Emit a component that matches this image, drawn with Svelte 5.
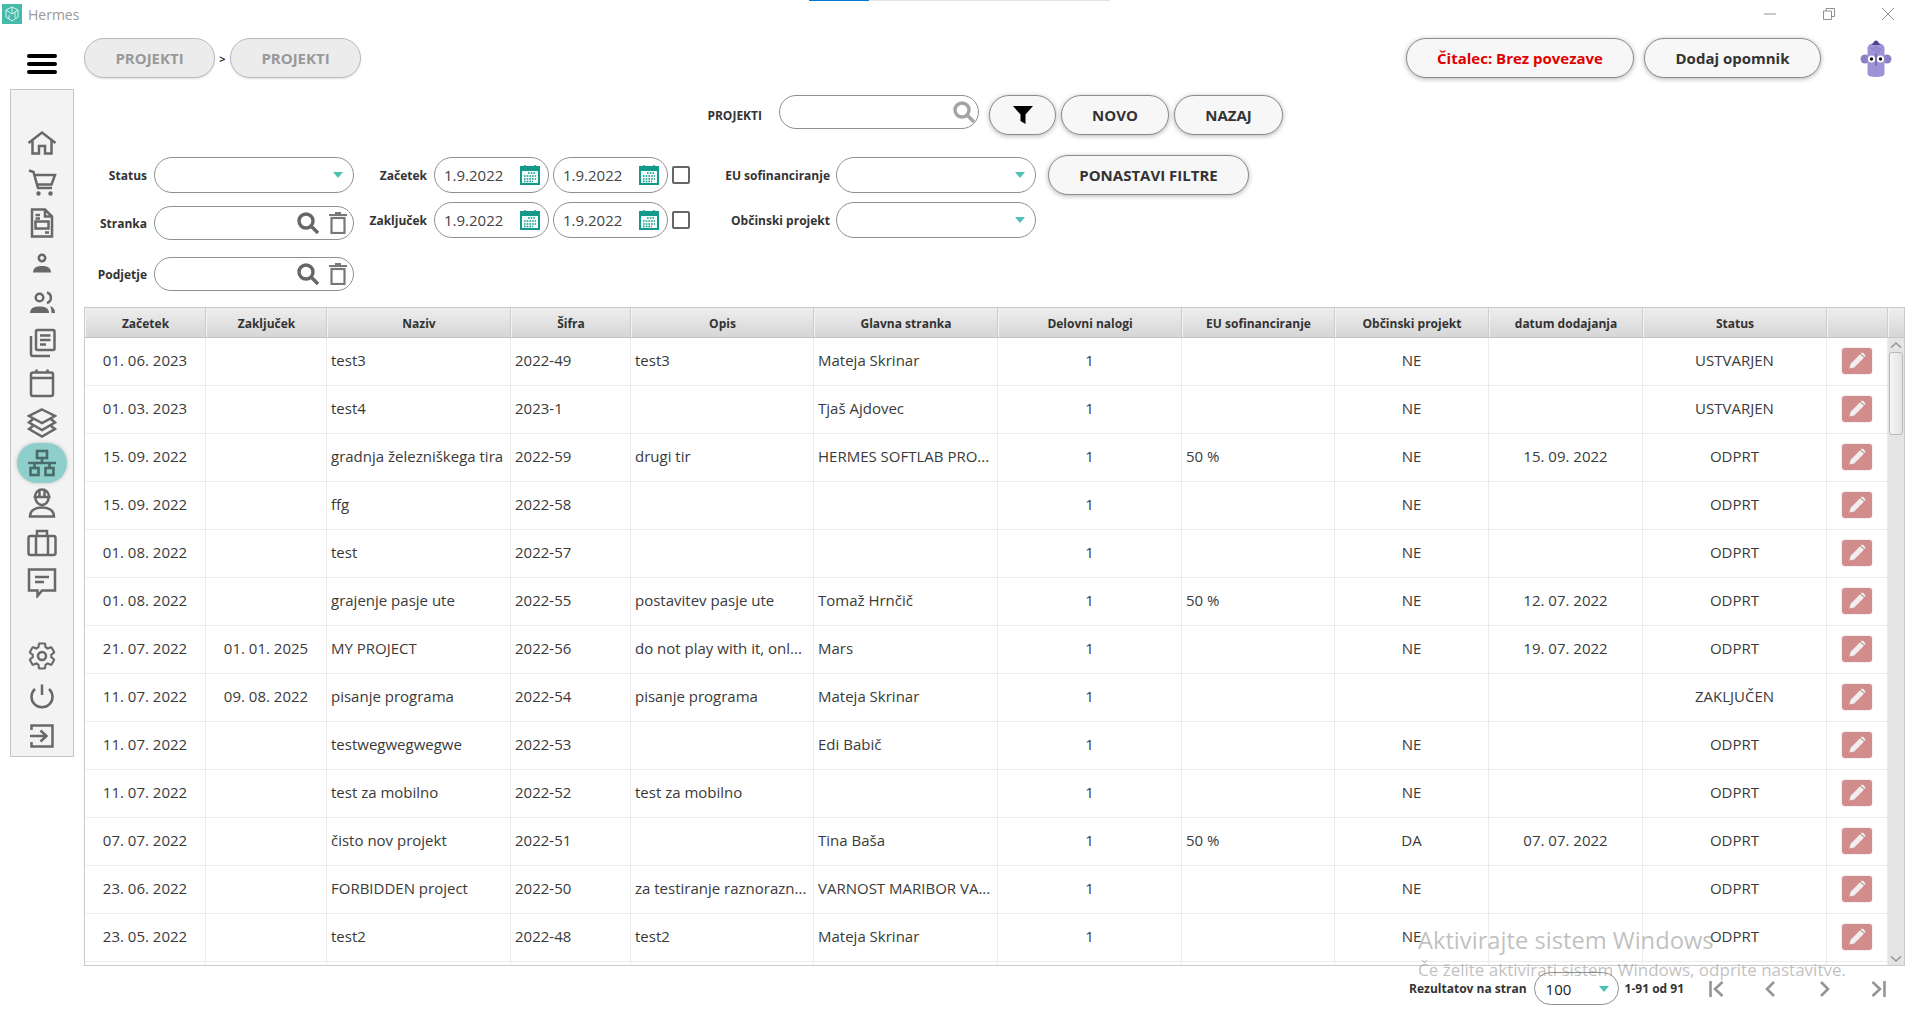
<script>
	const rows = [
		['01. 06. 2023', '', 'test3', '2022-49', 'test3', 'Mateja Skrinar', '1', '', 'NE', '', 'USTVARJEN'],
		['01. 03. 2023', '', 'test4', '2023-1', '', 'Tjaš Ajdovec', '1', '', 'NE', '', 'USTVARJEN'],
		['15. 09. 2022', '', 'gradnja železniškega tira', '2022-59', 'drugi tir', 'HERMES SOFTLAB PRO...', '1', '50 %', 'NE', '15. 09. 2022', 'ODPRT'],
		['15. 09. 2022', '', 'ffg', '2022-58', '', '', '1', '', 'NE', '', 'ODPRT'],
		['01. 08. 2022', '', 'test', '2022-57', '', '', '1', '', 'NE', '', 'ODPRT'],
		['01. 08. 2022', '', 'grajenje pasje ute', '2022-55', 'postavitev pasje ute', 'Tomaž Hrnčič', '1', '50 %', 'NE', '12. 07. 2022', 'ODPRT'],
		['21. 07. 2022', '01. 01. 2025', 'MY PROJECT', '2022-56', 'do not play with it, onl...', 'Mars', '1', '', 'NE', '19. 07. 2022', 'ODPRT'],
		['11. 07. 2022', '09. 08. 2022', 'pisanje programa', '2022-54', 'pisanje programa', 'Mateja Skrinar', '1', '', '', '', 'ZAKLJUČEN'],
		['11. 07. 2022', '', 'testwegwegwegwe', '2022-53', '', 'Edi Babič', '1', '', 'NE', '', 'ODPRT'],
		['11. 07. 2022', '', 'test za mobilno', '2022-52', 'test za mobilno', '', '1', '', 'NE', '', 'ODPRT'],
		['07. 07. 2022', '', 'čisto nov projekt', '2022-51', '', 'Tina Baša', '1', '50 %', 'DA', '07. 07. 2022', 'ODPRT'],
		['23. 06. 2022', '', 'FORBIDDEN project', '2022-50', 'za testiranje raznorazn...', 'VARNOST MARIBOR VA...', '1', '', 'NE', '', 'ODPRT'],
		['23. 05. 2022', '', 'test2', '2022-48', 'test2', 'Mateja Skrinar', '1', '', 'NE', '', 'ODPRT']
	];

	const headers = [
		'Začetek', 'Zaključek', 'Naziv', 'Šifra', 'Opis', 'Glavna stranka',
		'Delovni nalogi', 'EU sofinanciranje', 'Občinski projekt', 'datum dodajanja', 'Status', ''
	];

	// columns with left aligned text, everything else is centered
	const leftCols = [2, 3, 4, 5, 7];
</script>

{#snippet searchIcon()}
	<svg class="ico-search" viewBox="0 0 22 22">
		<circle cx="9" cy="9" r="7" />
		<path d="M14 14 L21 21" />
	</svg>
{/snippet}

{#snippet trashIcon()}
	<svg class="ico-trash" viewBox="0 0 18 22">
		<path d="M0 3 H18 M6 1 H12" />
		<rect x="2.5" y="6" width="13" height="15" />
	</svg>
{/snippet}

{#snippet caret()}
	<span class="caret"></span>
{/snippet}

{#snippet dateField()}
	<div class="field date">
		<span>1.9.2022</span>
		<svg class="ico-cal" viewBox="0 0 20 20">
			<rect x="0" y="1" width="20" height="19" fill="#12998a" />
			<rect x="2" y="6" width="16" height="12" fill="#f3fbfa" />
			<path d="M5 0 V2 M15 0 V2" stroke="#12998a" stroke-width="1.5" />
			<path d="M8 8 H16 M4 11 H16 M4 14 H16 M4 16.5 H13" stroke="#12998a" stroke-width="1.6" stroke-dasharray="1.6 1.1" />
		</svg>
	</div>
{/snippet}

<div class="app">
	<div class="titlebar">
		<div class="progress"><span></span></div>
		<span class="logo">
			<svg viewBox="0 0 20 20" width="20" height="20">
				<path d="M10 3 L16 6 V13 L10 17 L4 13 V6 Z M10 3 V10 M4 6 L10 10 L16 6 M7 11 V15 M13 8 V14" fill="none" stroke="#d8f3ef" stroke-width="1" />
			</svg>
		</span>
		<span class="app-name">Hermes</span>
		<div class="win-controls">
			<svg viewBox="0 0 12 12"><path d="M0 6 H12" /></svg>
			<svg viewBox="0 0 12 12"><path d="M0.5 3 H8.5 V11.5 H0.5 Z M3 3 V0.5 H11.5 V8.5 H8.5" /></svg>
			<svg viewBox="0 0 12 12"><path d="M0 0 L12 12 M12 0 L0 12" /></svg>
		</div>
	</div>

	<div class="shell">
		<div class="rail">
			<div class="burger"><span></span><span></span><span></span></div>
			<nav class="sidebar">
				<div class="nav-item">
					<svg viewBox="0 0 30 30"><path d="M1.5 15 L15 4.5 L28.5 15 M5.5 12 V25.5 H12 V18 H18 V25.5 H24.5 V12" /></svg>
				</div>
				<div class="nav-item">
					<svg viewBox="0 0 30 30"><path d="M2 2.5 L6.5 4 L11 20 H25 M8 7 H28 L24.5 16.5 H10" /><circle class="fill" cx="11.5" cy="25.5" r="2.2" /><circle class="fill" cx="23.5" cy="25.5" r="2.2" /></svg>
				</div>
				<div class="nav-item">
					<svg viewBox="0 0 30 30"><path d="M5 1.5 H18 L25 8.5 V28.5 H5 Z M18 1.5 V8.5 H25 M8.5 7 H13 M8.5 10.5 H13 M18 24.5 H22" /><rect x="8.5" y="13.5" width="13" height="7" /></svg>
				</div>
				<div class="nav-item">
					<svg viewBox="0 0 30 30"><circle cx="15" cy="10" r="3.2" /><path class="fill" d="M6 24.5 C6 19 11 18 15 18 S24 19 24 24.5 Z" /></svg>
				</div>
				<div class="nav-item">
					<svg viewBox="0 0 30 30"><circle cx="12.5" cy="9.5" r="3.8" /><path d="M20 4.5 A5.5 5.5 0 0 1 20 15" /><path class="fill" d="M3 25 C3 19.5 8 18.5 12.5 18.5 S22 19.5 22 25 Z" /><path class="fill" d="M23 18 C26 19 28 21 28 25 H24.5 C24.5 22 24 20 23 18 Z" /></svg>
				</div>
				<div class="nav-item">
					<svg viewBox="0 0 30 30"><rect x="9" y="2" width="18.5" height="20" rx="1.5" /><path d="M4 8 V26 Q4 28 6 28 H23 M13 7.5 H23.5 M13 12 H23.5 M13 16.5 H19" /></svg>
				</div>
				<div class="nav-item">
					<svg viewBox="0 0 30 30"><rect x="4" y="4.5" width="22" height="23.5" rx="2" /><path d="M4 10 H26 M9.5 1.5 V4.5 M20.5 1.5 V4.5" /></svg>
				</div>
				<div class="nav-item">
					<svg viewBox="0 0 30 30"><path d="M15 1.5 L28 8 L15 15 L2 8 Z M6 11 L2 14.5 L15 22 L28 14.5 L24 11 M6 18 L2 21 L15 28.5 L28 21 L24 18" /></svg>
				</div>
				<div class="nav-item active">
					<svg viewBox="0 0 30 30"><rect x="10" y="3" width="10" height="7" /><path d="M15 10 V15 M1 15 H29 M7.5 15 V20 M22.5 15 V20" /><rect x="3.5" y="20" width="8" height="7" /><rect x="18.5" y="20" width="8" height="7" /></svg>
				</div>
				<div class="nav-item">
					<svg viewBox="0 0 30 30"><path d="M8 8.5 A7 7 0 0 1 22 8.5 M6.5 9 H23.5 M8.5 10 A6.5 7 0 0 0 21.5 10 M12.5 1.5 V8 M17.5 1.5 V8" /><path d="M3 28.5 C3 22 9 19.5 15 19.5 S27 22 27 28.5 Z" /></svg>
				</div>
				<div class="nav-item">
					<svg viewBox="0 0 30 30"><rect x="1.5" y="8" width="27" height="19" rx="2" /><path d="M10 8 V3 H20 V8 M9 8 V27 M21 8 V27" /></svg>
				</div>
				<div class="nav-item">
					<svg viewBox="0 0 30 30"><path d="M2 1.5 H28 V22.5 H15 L10.5 28 V22.5 H2 Z M8 9 H22 M8 14 H17" /></svg>
				</div>

				<div class="nav-spacer"></div>

				<div class="nav-item">
					<svg viewBox="0 0 30 30">
						<path transform="scale(1.25)" stroke-width="1.7" d="M19.43 12.98c.04-.32.07-.64.07-.98 0-.34-.03-.66-.07-.98l2.11-1.65c.19-.15.24-.42.12-.64l-2-3.46c-.12-.22-.39-.3-.61-.22l-2.49 1c-.52-.4-1.08-.73-1.69-.98l-.38-2.65C14.46 2.18 14.25 2 14 2h-4c-.25 0-.46.18-.49.42l-.38 2.65c-.61.25-1.17.59-1.69.98l-2.49-1c-.23-.09-.49 0-.61.22l-2 3.46c-.13.22-.07.49.12.64l2.11 1.65c-.04.32-.07.65-.07.98 0 .33.03.66.07.98l-2.11 1.65c-.19.15-.24.42-.12.64l2 3.46c.12.22.39.3.61.22l2.49-1c.52.4 1.08.73 1.69.98l.38 2.65c.03.24.24.42.49.42h4c.25 0 .46-.18.49-.42l.38-2.65c.61-.25 1.17-.59 1.69-.98l2.49 1c.23.09.49 0 .61-.22l2-3.46c.12-.22.07-.49-.12-.64l-2.11-1.65z" />
						<circle cx="15" cy="15" r="4" />
					</svg>
				</div>
				<div class="nav-item">
					<svg viewBox="0 0 30 30"><path d="M15 3.5 V14 M8 8 A10.5 10.5 0 1 0 22 8" /></svg>
				</div>
				<div class="nav-item">
					<svg viewBox="0 0 30 30"><path d="M4.5 9 V4.5 H25.5 V25.5 H4.5 V21 M3 15 H19 M13.5 9.5 L19.5 15 L13.5 20.5" /></svg>
				</div>
			</nav>
		</div>

		<main class="content">
			<div class="topbar">
				<div class="crumb">PROJEKTI</div>
				<span class="crumb-sep">&gt;</span>
				<div class="crumb">PROJEKTI</div>
				<div class="top-spacer"></div>
				<button class="pill reader">Čitalec: Brez povezave</button>
				<button class="pill reminder">Dodaj opomnik</button>
				<svg class="mascot" viewBox="0 0 32 38">
					<circle cx="5" cy="20" r="4.5" fill="#8a80c4" />
					<circle cx="27" cy="20" r="4.5" fill="#8a80c4" />
					<path d="M7.5 9 Q8 4 16 4 Q24 4 24.5 9 V35 Q24 38 16 38 Q8 38 7.5 35 Z" fill="#9d93d6" />
					<path d="M12 6 Q16 -3 20 6 Z" fill="#4b4390" />
					<path d="M11 9 L20 13 M14 8 L22 11" stroke="#8178bd" stroke-width="0.8" />
					<circle cx="11.5" cy="20" r="3.6" fill="#fff" />
					<circle cx="20.5" cy="20" r="3.6" fill="#fff" />
					<circle cx="11.5" cy="20" r="1.7" fill="#111" />
					<circle cx="20.5" cy="20" r="1.7" fill="#111" />
					<path d="M16 14 V27" stroke="#4b4390" stroke-width="0.8" />
				</svg>
			</div>

			<div class="search-row">
				<label class="lbl search-lbl" for="project-search">PROJEKTI</label>
				<div class="field search-field">
					<input id="project-search" />
					<svg class="ico-search light" viewBox="0 0 22 22">
						<circle cx="9" cy="9" r="7" />
						<path d="M14 14 L21 21" />
					</svg>
				</div>
				<button class="pill filter-btn" aria-label="Filter">
					<svg viewBox="0 0 20 18" width="20" height="18"><path d="M0 0 H20 L12.5 8.5 V18 L7.5 15 V8.5 Z" fill="#000" /></svg>
				</button>
				<button class="pill novo">NOVO</button>
				<button class="pill nazaj">NAZAJ</button>
			</div>

			<div class="filters">
				<div class="group left">
					<div class="f-row status">
						<span class="lbl">Status</span>
						<div class="field select">{@render caret()}</div>
					</div>
					<div class="f-row stranka">
						<span class="lbl">Stranka</span>
						<div class="field lookup">{@render searchIcon()}{@render trashIcon()}</div>
					</div>
					<div class="f-row podjetje">
						<span class="lbl">Podjetje</span>
						<div class="field lookup">{@render searchIcon()}{@render trashIcon()}</div>
					</div>
				</div>

				<div class="group mid">
					<div class="f-row">
						<span class="lbl">Začetek</span>
						{@render dateField()}
						{@render dateField()}
						<span class="check"></span>
					</div>
					<div class="f-row">
						<span class="lbl">Zaključek</span>
						{@render dateField()}
						{@render dateField()}
						<span class="check"></span>
					</div>
				</div>

				<div class="group right">
					<div class="f-row">
						<span class="lbl">EU sofinanciranje</span>
						<div class="field select">{@render caret()}</div>
					</div>
					<div class="f-row">
						<span class="lbl">Občinski projekt</span>
						<div class="field select">{@render caret()}</div>
					</div>
				</div>

				<button class="pill reset">PONASTAVI FILTRE</button>
			</div>

			<div class="grid">
				<div class="grid-head">
					<div class="cols">
						{#each headers as h}
							<div class="th">{h}</div>
						{/each}
					</div>
					<div class="th corner"></div>
				</div>
				<div class="grid-body">
					<div class="rows">
						{#each rows as row}
							<div class="cols tr">
								{#each row as cell, i}
									<div class="td text" class:left={leftCols.includes(i)}>{cell}</div>
								{/each}
								<div class="td action">
									<button class="edit" aria-label="Uredi">
										<svg viewBox="0 0 16 16" width="17" height="17"><path d="M0.5 15.5 L1.5 11 L10.5 2 L14 5.5 L5 14.5 Z M11.5 1 Q12.5 0 13.5 1 L15 2.5 Q16 3.5 15 4.5 L14.7 4.8 L11.2 1.3 Z" fill="#f1eeee" /></svg>
									</button>
								</div>
							</div>
						{/each}
						<div class="cols tr stub">
							{#each headers as h}
								<div class="td"></div>
							{/each}
						</div>
					</div>
					<div class="scrollbar">
						<svg class="chev" viewBox="0 0 12 6"><path d="M1 5.5 L6 1 L11 5.5" /></svg>
						<div class="thumb"></div>
						<div class="track-fill"></div>
						<svg class="chev" viewBox="0 0 12 6"><path d="M1 0.5 L6 5 L11 0.5" /></svg>
					</div>
				</div>
			</div>

			<div class="pager">
				<span class="lbl">Rezultatov na stran</span>
				<div class="field page-size"><span>100</span>{@render caret()}</div>
				<span class="lbl count">1-91 od 91</span>
				<div class="pager-nav">
					<svg viewBox="0 0 15 16"><path d="M1.5 0 V16 M13.5 1 L6 8 L13.5 15" /></svg>
					<svg viewBox="0 0 15 16"><path d="M11 1 L4 8 L11 15" /></svg>
					<svg viewBox="0 0 15 16"><path d="M4 1 L11 8 L4 15" /></svg>
					<svg viewBox="0 0 15 16"><path d="M1.5 1 L9 8 L1.5 15 M13.5 0 V16" /></svg>
				</div>
			</div>
		</main>
	</div>

	<div class="watermark">
		<div class="wm-title">Aktivirajte sistem Windows</div>
		<div class="wm-sub">Če želite aktivirati sistem Windows, odprite nastavitve.</div>
	</div>
</div>

<style>
	:global(body) {
		margin: 0;
		background: #fff;
	}

	.app {
		position: relative;
		width: 1920px;
		height: 1026px;
		overflow: hidden;
		background: #fff;
		font-family: 'Open Sans', 'Liberation Sans', sans-serif;
		color: #333;
	}

	/* title bar */
	.titlebar {
		position: relative;
		height: 30px;
		display: flex;
		align-items: center;
		padding-left: 2px;
		box-sizing: border-box;
	}

	.progress {
		position: absolute;
		left: 809px;
		top: 0;
		width: 301px;
		height: 1px;
		background: #e2e2e2;
	}

	.progress span {
		display: block;
		width: 60px;
		height: 1px;
		background: #0078d7;
	}

	.logo {
		width: 20px;
		height: 20px;
		background: #45b9aa;
		margin-top: -2px;
	}

	.app-name {
		margin-left: 6px;
		margin-top: -2px;
		font-size: 14px;
		color: #999;
	}

	.win-controls {
		margin-left: auto;
		display: flex;
		gap: 47px;
		padding-right: 26px;
		margin-top: -2px;
	}

	.win-controls svg {
		width: 12px;
		height: 12px;
		fill: none;
		stroke: #8f8f8f;
		stroke-width: 1;
	}

	.shell {
		display: flex;
	}

	/* left rail */
	.rail {
		width: 84px;
		flex: none;
		padding-left: 10px;
		box-sizing: border-box;
	}

	.burger {
		width: 30px;
		margin: 24px 0 15px 17px;
		display: flex;
		flex-direction: column;
		gap: 4px;
	}

	.burger span {
		height: 4px;
		border-radius: 2px;
		background: #000;
	}

	.sidebar {
		width: 64px;
		height: 668px;
		box-sizing: border-box;
		border: 1px solid #c6c6c6;
		background: #f3f3f3;
		padding-top: 33px;
		display: flex;
		flex-direction: column;
		align-items: center;
	}

	.nav-item {
		width: 50px;
		height: 40px;
		flex: none;
		display: flex;
		align-items: center;
		justify-content: center;
		border-radius: 20px;
	}

	.nav-item svg {
		width: 30px;
		height: 30px;
		fill: none;
		stroke: #686868;
		stroke-width: 2.5;
	}

	.nav-item .fill {
		fill: #686868;
		stroke: none;
	}

	.nav-item.active {
		background: #8fcfcb;
		box-shadow: 0 0 4px rgba(0, 0, 0, 0.2);
	}

	.nav-item.active svg {
		stroke: #496b6a;
		stroke-width: 2.6;
	}

	.nav-spacer {
		height: 33px;
		flex: none;
	}

	/* main column */
	.content {
		flex: 1;
		min-width: 0;
		padding-right: 15px;
	}

	.topbar {
		margin-top: 8px;
		height: 40px;
		display: flex;
		align-items: center;
	}

	.crumb {
		width: 131px;
		height: 40px;
		box-sizing: border-box;
		display: flex;
		align-items: center;
		justify-content: center;
		border: 1px solid #bbb;
		border-radius: 20px;
		background: #ececec;
		box-shadow: 0 1px 2px rgba(0, 0, 0, 0.12);
		font-size: 15px;
		font-weight: 700;
		color: #999;
	}

	.crumb-sep {
		width: 15px;
		text-align: center;
		font-size: 11px;
		font-weight: 700;
		color: #333;
	}

	.top-spacer {
		flex: 1;
	}

	.pill {
		height: 40px;
		box-sizing: border-box;
		padding: 0;
		border: 1px solid #8c8c8c;
		border-radius: 20px;
		background: #f7f7f7;
		box-shadow: 0 1px 5px rgba(0, 0, 0, 0.3);
		font-family: inherit;
		font-size: 15px;
		font-weight: 700;
		color: #333;
		display: flex;
		align-items: center;
		justify-content: center;
	}

	.reader {
		width: 228px;
		color: #e00000;
	}

	.reminder {
		width: 177px;
		margin-left: 10px;
	}

	.mascot {
		width: 32px;
		height: 38px;
		margin: 0 13px 0 39px;
	}

	.lbl {
		font-size: 12px;
		font-weight: 700;
		color: #333;
		text-align: right;
		white-space: nowrap;
	}

	.search-row {
		margin-top: 17px;
		height: 39px;
		display: flex;
		align-items: flex-start;
	}

	.search-lbl {
		width: 678px;
		height: 39px;
		line-height: 41px;
		margin-right: 17px;
	}

	.field {
		position: relative;
		box-sizing: border-box;
		border: 1px solid #8f8f8f;
		border-radius: 18px;
		background: #fff;
		display: flex;
		align-items: center;
	}

	.search-field {
		width: 200px;
		height: 34px;
		margin-right: 10px;
	}

	.search-field input {
		border: 0;
		outline: 0;
		background: none;
		width: 150px;
		margin-left: 10px;
	}

	.ico-search {
		width: 22px;
		height: 22px;
		fill: none;
		stroke: #666;
		stroke-width: 3.4;
		flex: none;
	}

	.ico-search.light {
		stroke: #a3a3a3;
		margin-left: auto;
		margin-right: 3px;
	}

	.filter-btn {
		width: 67px;
	}

	.novo {
		width: 108px;
		margin-left: 5px;
	}

	.nazaj {
		width: 109px;
		margin-left: 5px;
	}

	/* filters */
	.filters {
		margin-top: 21px;
		display: flex;
		align-items: flex-start;
	}

	.group {
		padding-top: 2px;
	}

	.f-row {
		display: flex;
		align-items: center;
	}

	.left .lbl {
		width: 63px;
		margin-right: 7px;
	}

	.left .select {
		height: 36px;
	}

	.left .stranka {
		margin-top: 13px;
	}

	.left .podjetje {
		margin-top: 17px;
	}

	.select,
	.lookup {
		width: 200px;
		justify-content: flex-end;
	}

	.lookup {
		height: 34px;
		padding-right: 6px;
		gap: 10px;
	}

	.ico-trash {
		width: 18px;
		height: 22px;
		fill: none;
		stroke: #777;
		stroke-width: 2.2;
		flex: none;
	}

	.caret {
		width: 0;
		height: 0;
		border-left: 5px solid transparent;
		border-right: 5px solid transparent;
		border-top: 6px solid #4fc0b5;
	}

	.select .caret {
		margin-right: 10px;
	}

	.mid .f-row {
		gap: 4px;
		height: 36px;
	}

	.mid .f-row + .f-row {
		margin-top: 9px;
	}

	.mid .lbl {
		width: 73px;
		margin-right: 3px;
	}

	.date {
		width: 115px;
		height: 36px;
		padding: 0 8px 0 9px;
		justify-content: space-between;
		font-size: 15px;
		color: #444;
	}

	.ico-cal {
		width: 20px;
		height: 20px;
		flex: none;
	}

	.check {
		width: 18px;
		height: 18px;
		box-sizing: border-box;
		border: 2px solid #666;
		border-radius: 2px;
		background: #fff;
	}

	.right .f-row {
		height: 36px;
	}

	.right .f-row + .f-row {
		margin-top: 9px;
	}

	.right .lbl {
		width: 140px;
		margin-right: 6px;
	}

	.right .select {
		height: 36px;
	}

	.reset {
		width: 201px;
		margin-left: 12px;
	}

	/* table */
	.grid {
		margin-top: 16px;
		height: 659px;
		box-sizing: border-box;
		border: 1px solid #cacaca;
		overflow: hidden;
	}

	.grid-head {
		display: flex;
		height: 29px;
		border-bottom: 1px solid #c4c4c4;
	}

	.cols {
		display: grid;
		grid-template-columns: 121px 121px 184px 120px 183px 184px 184px 153px 154px 154px 184px 61px;
	}

	.th {
		box-sizing: border-box;
		height: 29px;
		padding-top: 2px;
		display: flex;
		align-items: center;
		justify-content: center;
		background: linear-gradient(#eeeeee, #d6d6d6);
		border-right: 1px solid #cdcdcd;
		border-left: 1px solid #f4f4f4;
		font-size: 12px;
		font-weight: 700;
		color: #333;
	}

	.corner {
		width: 16px;
		flex: none;
		border-right: 0;
	}

	.grid-body {
		display: flex;
		height: 628px;
	}

	.rows {
		overflow: hidden;
	}

	.tr {
		height: 48px;
	}

	.td {
		box-sizing: border-box;
		height: 48px;
		border-right: 1px solid #ececec;
		border-bottom: 1px solid #ececec;
		display: flex;
		align-items: center;
		justify-content: center;
		font-size: 15px;
		color: #3a3a3a;
		white-space: nowrap;
		overflow: hidden;
	}

	.td.text {
		padding-bottom: 3px;
	}

	.td.action {
		padding-bottom: 2px;
	}

	.td.left {
		justify-content: flex-start;
		padding-left: 4px;
	}

	.edit {
		width: 30px;
		height: 26px;
		padding: 0;
		border: 0;
		border-radius: 3px;
		background: #d28c8c;
		box-shadow: 0 0 2px rgba(0, 0, 0, 0.2);
		display: flex;
		align-items: center;
		justify-content: center;
	}

	.scrollbar {
		width: 16px;
		flex: none;
		background: #e4e4e4;
		display: flex;
		flex-direction: column;
		align-items: center;
	}

	.chev {
		width: 12px;
		height: 6px;
		fill: none;
		stroke: #8a8a8a;
		stroke-width: 1.2;
		margin: 4px 0;
		flex: none;
	}

	.thumb {
		width: 14px;
		height: 83px;
		box-sizing: border-box;
		border: 1px solid #b9b9b9;
		border-radius: 3px;
		background: linear-gradient(90deg, #f6f6f6, #e2e2e2);
		flex: none;
	}

	.track-fill {
		flex: 1;
	}

	/* pager */
	.pager {
		margin-top: 6px;
		padding-right: 19px;
		display: flex;
		align-items: center;
		justify-content: flex-end;
	}

	.page-size {
		width: 85px;
		height: 33px;
		margin: 0 6px 0 7px;
		padding: 0 9px 0 11px;
		justify-content: space-between;
		font-size: 15px;
		color: #222;
	}

	.pager-nav {
		display: flex;
		gap: 39px;
		margin-left: 25px;
	}

	.pager-nav svg {
		width: 15px;
		height: 16px;
		fill: none;
		stroke: #959595;
		stroke-width: 2.6;
	}

	/* activation overlay from the OS */
	.watermark {
		position: absolute;
		left: 1418px;
		top: 922px;
		color: rgba(130, 130, 130, 0.5);
		pointer-events: none;
		white-space: nowrap;
	}

	.wm-title {
		font-size: 23.7px;
		line-height: 37px;
	}

	.wm-sub {
		font-size: 17px;
		line-height: 22px;
	}
</style>
